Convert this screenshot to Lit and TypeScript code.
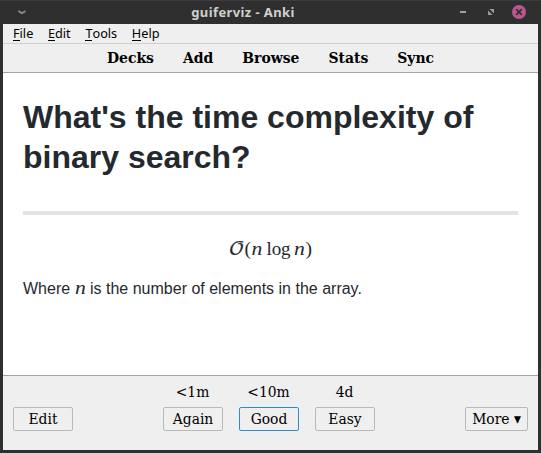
import { LitElement, html, css } from "lit";
import { customElement } from "lit/decorators.js";

const menus = ["File", "Edit", "Tools", "Help"];
const tabs = ["Decks", "Add", "Browse", "Stats", "Sync"];
const answers = [
  { due: "<1m", label: "Again", focus: false },
  { due: "<10m", label: "Good", focus: true },
  { due: "4d", label: "Easy", focus: false },
];

@customElement("app-root")
export class AppRoot extends LitElement {
  static styles = css`
    :host { display: block; }
    * { box-sizing: border-box; }
    .window {
      width: 541px; height: 453px; display: flex; flex-direction: column;
      background: #2f2f2f; padding: 0 3px 3px; overflow: hidden;
      border-top: 1px solid #3c3c3c;
    }
    .title {
      height: 23px; flex: none; display: grid; grid-template-columns: 35px 1fr 90px;
      align-items: center;
      font: bold 13px/23px "Noto Sans", sans-serif; color: #d0d0d0;
    }
    .title svg { display: block; }
    .name { text-align: center; white-space: nowrap; letter-spacing: 0.4px; }
    .menu {
      height: 20px; flex: none; display: flex; gap: 14.7px; padding-left: 10px;
      background: #efefef; border-bottom: 1px solid #d0d0d0;
      font: 12.7px/19px "Noto Sans", sans-serif; color: #000;
    }
    .key { box-shadow: 0 1px 0 #000; display: inline-block; height: 16px; }
    .tabs {
      height: 29px; flex: none; display: flex; justify-content: center; gap: 29px;
      background: #efefef; border-bottom: 1px solid #a2a2a2;
      font: bold 15.5px/28px "DejaVu Serif Condensed", "DejaVu Serif", serif;
      font-stretch: condensed; color: #000;
    }
    .card {
      flex: 1; background: #fff; padding: 24px 20px 0; color: #24292e;
      font: 16px/24px "Liberation Sans", Arial, sans-serif;
    }
    h1 { margin: 0; font-size: 32px; line-height: 40px; font-weight: bold; }
    .rule { height: 4px; background: #e1e4e8; margin: 34px 0 20px; }
    .formula { display: block; width: 90px; height: 32px; margin: 0 auto; overflow: visible; }
    .math { font-family: "Liberation Serif", serif; fill: #24292e; }
    .script {
      font-family: "DejaVu Math TeX Gyre", "DejaVu Serif", serif;
      fill: #24292e; stroke: #24292e; stroke-width: 0.2;
    }
    .it { font-style: italic; }
    p { margin: 10px 0 0; white-space: nowrap; }
    .n {
      font: italic 18px/20px "Liberation Serif", serif; display: inline-block; width: 11px;
      transform: scaleX(1.2); transform-origin: 0 50%;
    }
    .bottom {
      height: 75px; flex: none; background: #efefef; border-top: 1px solid #a2a2a2;
      padding: 6px 10px 0; display: flex; justify-content: space-between;
      font: 15.4px/22px "DejaVu Serif Condensed", "DejaVu Serif", serif;
      font-stretch: condensed; color: #000;
    }
    .side { padding-top: 25px; }
    .answers { display: flex; gap: 16px; }
    .answer { display: flex; flex-direction: column; align-items: center; width: 60px; }
    .due { height: 25px; line-height: 21px; margin-left: -1px; }
    button {
      width: 60px; height: 24px; padding: 0; border: 1px solid #b9b9b9; border-radius: 2px;
      background: #efefef; font: inherit; color: #000; white-space: nowrap; display: block;
    }
    .focus { border-color: #308cc6; }
    .more { width: 63px; }
  `;

  render() {
    return html`
      <div class="window">
        <div class="title">
          <svg width="35" height="23" viewBox="0 0 35 23">
            <path d="M15.5 10 L19 12.2 L22.5 10" fill="none" stroke="#8f8f8f" stroke-width="1.9" />
          </svg>
          <div class="name">guiferviz - Anki</div>
          <svg width="90" height="23" viewBox="0 0 90 23">
            <path d="M12 10h6v2h-6z" fill="#a0a0a0" />
            <path d="M41.5 8h4.5v4.5zM40 9.5v4.5h4.5z" fill="#9a9a9a" />
            <circle cx="71" cy="11" r="7" fill="#b9588f" />
            <path d="M68.2 8.2l5.6 5.6M73.8 8.2l-5.6 5.6" stroke="#2f2f2f" stroke-width="1.7" />
          </svg>
        </div>
        <div class="menu">
          ${menus.map((m) => html`<span><span class="key">${m[0]}</span>${m.slice(1)}</span>`)}
        </div>
        <div class="tabs">${tabs.map((t) => html`<span>${t}</span>`)}</div>
        <div class="card">
          <h1>What's the time complexity of binary search?</h1>
          <div class="rule"></div>
          <svg class="formula" viewBox="0 0 90 32">
            <text class="script" transform="translate(2.6 20) scale(1.15 1)" font-size="18">𝒪</text>
            <text class="math" x="18.6" y="20" font-size="19.5">(</text>
            <text class="math it" transform="translate(25.5 20) scale(1.2 1)" font-size="18">n</text>
            <text class="math" x="40.5" y="20" font-size="19" textLength="24">log</text>
            <text class="math it" transform="translate(68 20) scale(1.2 1)" font-size="18">n</text>
            <text class="math" x="79.5" y="20" font-size="19.5">)</text>
          </svg>
          <p>Where <span class="n">n</span> is the number of elements in the array.</p>
        </div>
        <div class="bottom">
          <div class="side"><button>Edit</button></div>
          <div class="answers">
            ${answers.map((a) => html`<div class="answer">
              <span class="due">${a.due}</span>
              <button class=${a.focus ? "focus" : ""}>${a.label}</button>
            </div>`)}
          </div>
          <div class="side"><button class="more">More ▾</button></div>
        </div>
      </div>
    `;
  }
}
